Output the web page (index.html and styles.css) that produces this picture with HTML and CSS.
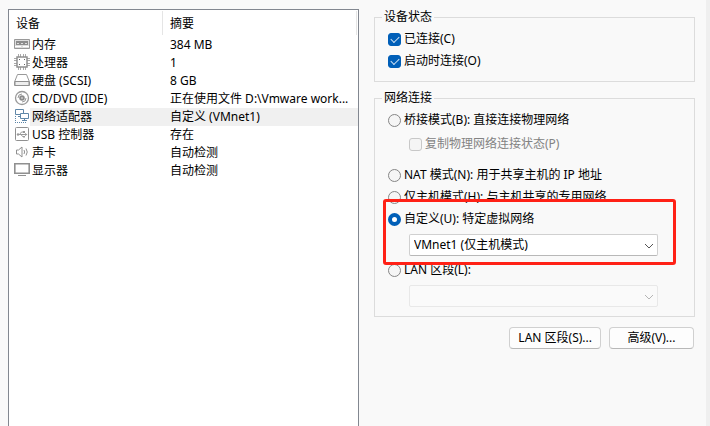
FILE: index.html
```html
<!DOCTYPE html>
<html lang="zh-CN">
<head>
    <meta charset="UTF-8">
    <meta name="viewport" content="width=device-width, initial-scale=1.0">
    <title>虚拟机设置</title>
    <link rel="stylesheet" href="styles.css">
</head>
<body>

<div class="device-panel">
    <table class="device-table">
        <thead>
            <tr><th class="col-name">设备</th><th class="col-summary">摘要</th></tr>
        </thead>
        <tbody>
            <tr>
                <td><div class="device"><svg class="icon" viewBox="0 0 16 16"><path d="M.5 3.500h15v9H.5z" fill="#ddd" stroke="#999"/><path d="M2 5h12v4H2z" fill="#8c8c8c"/><path d="M3 7.500h2M7 7.500h2M11 7.500h2" stroke="#ddd"/><path d="M1 10.500h6M9 10.500h6" stroke="#fff"/></svg><span class="name">内存</span></div></td>
                <td>384 MB</td>
            </tr>
            <tr>
                <td><div class="device"><svg class="icon" viewBox="0 0 16 16"><path d="M4.500 0v3M6.500 0v3M9.500 0v3M11.500 0v3M4.500 13v3M6.500 13v3M9.500 13v3M11.500 13v3M13 4.500h3M13 6.500h3M13 9.500h3M13 11.500h3M0 4.500h3M0 6.500h3M0 9.500h3M0 11.500h3" stroke="#aaa"/><path d="M3 3h10v10H3z" fill="#fff" stroke="#909090" stroke-width="1.500"/><path d="M5 5h1v1H5zM10 5h1v1h-1zM5 10h1v1H5zM10 10h1v1h-1z" fill="#666"/></svg><span class="name">处理器</span></div></td>
                <td>1</td>
            </tr>
            <tr>
                <td><div class="device"><svg class="icon" viewBox="0 0 16 16"><path d="M3.500 2.500h9l3 7.500v3.500H.5V10z" fill="#fff" stroke="#999"/><path d="M1 9.500h14v4H1z" fill="#eee" stroke="#909090"/></svg><span class="name">硬盘 (SCSI)</span></div></td>
                <td>8 GB</td>
            </tr>
            <tr>
                <td><div class="device"><svg class="icon" viewBox="0 0 16 16"><g fill="none" stroke="#999"><circle cx="8" cy="8" r="6.500" fill="#fff" stroke-width="1.300"/><circle cx="8" cy="8" r="1.800" stroke="#8c8c8c" stroke-width="2"/><path d="M4 8a4 4 0 0 1 4-4M12 8a4 4 0 0 1-4 4"/></g></svg><span class="name">CD/DVD (IDE)</span></div></td>
                <td>正在使用文件 D:\Vmware work...</td>
            </tr>
            <tr class="selected">
                <td><div class="device"><svg class="icon" viewBox="0 0 16 16"><g fill="#fff" stroke="#5f87a8"><path d="M1.500 1.500h8v5h-8zM4 8.500h3"/><path d="M6.500 5.500h8v5h-8zM8 12.500h5M10.500 10.500v2"/></g><path d="M1.500 8v7M1 14.500h12" fill="none" stroke="#5f87a8" stroke-dasharray="1 1"/></svg><span class="name">网络适配器</span></div></td>
                <td>自定义 (VMnet1)</td>
            </tr>
            <tr>
                <td><div class="device"><svg class="icon" viewBox="0 0 16 16"><rect x="1.500" y="1.500" width="13" height="13" rx="1" fill="#fff" stroke="#909090"/><path d="M4 8.500h8M5.500 8.500l2-2.500H9M7 8.500l1.500 2H10" fill="none" stroke="#999"/><path d="M11 7l2.500 1.500L11 10zM9 5h2v2H9zM9 10h2v1.500H9z" fill="#999"/><circle cx="4" cy="8.500" r="1.200" fill="#999"/></svg><span class="name">USB 控制器</span></div></td>
                <td>存在</td>
            </tr>
            <tr>
                <td><div class="device"><svg class="icon" viewBox="0 0 16 16"><g fill="none" stroke="#909090"><path d="M2.500 6v4h2l3.500 3V3L4.500 6z" fill="#fff"/><path d="M10 6q1.200 2 0 4M12 4.500q2.500 3.500 0 7"/></g></svg><span class="name">声卡</span></div></td>
                <td>自动检测</td>
            </tr>
            <tr>
                <td><div class="device"><svg class="icon" viewBox="0 0 16 16"><path d="M.8 1.800h14.400v9.400H.8z" fill="#fff" stroke="#909090" stroke-width="1.600"/><path d="M4 13.500h8" stroke="#909090"/></svg><span class="name">显示器</span></div></td>
                <td>自动检测</td>
            </tr>
        </tbody>
    </table>
</div>

<form class="settings">
    <fieldset>
        <legend>设备状态</legend>
        <label class="option"><input type="checkbox" checked>已连接(C)</label>
        <label class="option"><input type="checkbox" checked>启动时连接(O)</label>
    </fieldset>

    <fieldset>
        <legend>网络连接</legend>
        <label class="option"><input type="radio" name="net">桥接模式(B): 直接连接物理网络</label>
        <label class="option sub disabled"><input type="checkbox" disabled>复制物理网络连接状态(P)</label>
        <label class="option"><input type="radio" name="net">NAT 模式(N): 用于共享主机的 IP 地址</label>
        <label class="option"><input type="radio" name="net">仅主机模式(H): 与主机共享的专用网络</label>
        <div class="custom">
            <label class="option"><input type="radio" name="net" checked>自定义(U): 特定虚拟网络</label>
            <div class="combo">
                <select aria-label="特定虚拟网络"><option>VMnet1 (仅主机模式)</option></select>
                <svg class="arrow" viewBox="0 0 10 6"><path d="M1 1l4 4 4-4"/></svg>
            </div>
            <div class="highlight"></div>
        </div>
        <label class="option"><input type="radio" name="net">LAN 区段(L):</label>
        <div class="combo">
            <select aria-label="LAN 区段" disabled><option></option></select>
            <svg class="arrow" viewBox="0 0 10 6"><path d="M1 1l4 4 4-4"/></svg>
        </div>
    </fieldset>

    <div class="buttons">
        <button type="button">LAN 区段(S)...</button>
        <button type="button">高级(V)...</button>
    </div>
</form>

</body>
</html>
```

FILE: styles.css
```css
* {
    box-sizing: border-box;
}
html {
    background-color: #f9f9f9;
}
body {
    margin: 0;
    padding: 9px 11px 0 8px;
    min-height: 100vh;
    display: grid;
    grid-template-columns: minmax(0, 1fr) 321px;
    gap: 15px;
    border-right: 4px solid #efefef;
    color: #000;
    font-family: "Noto Sans", "Noto Sans CJK SC", sans-serif;
    font-size: 12px;
    line-height: 18px;
}
input, select, button {
    margin: 0;
    font: inherit;
    color: inherit;
}

/* 设备列表 */
.device-panel {
    background-color: #fff;
    border: 1px solid #828790;
    border-bottom: none;
}
.device-table {
    width: 100%;
    table-layout: fixed;
    border-collapse: collapse;
}
.device-table th {
    height: 26px;
    padding: 2px 7px 0;
    font-weight: normal;
    text-align: left;
    background: linear-gradient(#e5e5e5, #e5e5e5) right 1px top 1px / 1px 24px no-repeat;
}
.device-table .col-name {
    width: 155px;
}
.device-table .col-summary {
    padding-left: 6px;
}
.device-table td {
    height: 18px;
    padding: 0 6px;
    white-space: nowrap;
    overflow: hidden;
    text-overflow: ellipsis;
}
.device-table td:first-child {
    padding: 0 0 0 5px;
}
.device {
    display: flex;
}
.icon {
    width: 16px;
    height: 16px;
    flex: none;
}
.name {
    flex: 1;
    padding-left: 2px;
}
.selected .name,
.selected td:last-child {
    background-color: #f0f0f0;
}

/* 右侧设置 */
fieldset {
    margin: 0 0 8px;
    padding: 3px 13px 9px;
    border: 1px solid #dcdcdc;
    min-width: 0;
}
legend {
    margin-left: -6px;
    padding: 0 2px;
    line-height: 16px;
}
.option {
    display: flex;
    align-items: center;
    gap: 3px;
    height: 22px;
}
.option input {
    appearance: none;
    width: 13px;
    height: 13px;
    border: 1px solid #868686;
    border-radius: 3px;
    background-color: #f5f5f5;
}
.option input[type="radio"] {
    border-radius: 50%;
}
.option input[type="radio"]:checked {
    border: 4px solid #005fb8;
    background-color: #fff;
}
.option input[type="checkbox"]:checked {
    border-color: #005fb8;
    background-color: #005fb8;
    display: grid;
    place-items: center;
}
.option input[type="checkbox"]:checked::before {
    content: "";
    width: 7px;
    height: 4px;
    margin-bottom: 2px;
    border-left: 1px solid #cfe2f4;
    border-bottom: 1px solid #cfe2f4;
    transform: rotate(-45deg);
}
.sub {
    margin: 2px 0 9px 21px;
}
.disabled {
    color: #838383;
}
.option input:disabled {
    border-color: #c8c8c8;
}
.combo {
    position: relative;
    margin: 4px 23px 3px 21px;
}
.combo select {
    display: block;
    appearance: none;
    width: 100%;
    height: 22px;
    padding: 0 20px 0 4px;
    border: 1px solid #d0d0d0;
    border-bottom-color: #b8b8b8;
    border-radius: 2px;
    background-color: #fff;
}
.combo select:disabled {
    border-color: #e8e8e8;
    background-color: #fafafa;
    opacity: 1;
}
.arrow {
    position: absolute;
    right: 4px;
    top: 9px;
    width: 10px;
    height: 6px;
    fill: none;
    stroke: #555;
    pointer-events: none;
}
select:disabled + .arrow {
    stroke: #b5b5b5;
}
.combo:last-child {
    margin-bottom: 0;
}
.custom {
    position: relative;
}
/* 红色标注框 */
.highlight {
    position: absolute;
    inset: -9px 5px -9px -5px;
    border: 3px solid #ff2116;
    border-radius: 3px;
    pointer-events: none;
}
.buttons {
    display: flex;
    justify-content: flex-end;
    gap: 8px;
    padding: 2px 1px 0 0;
}
.buttons button {
    height: 22px;
    min-width: 85px;
    padding: 0 8px;
    border: 1px solid #d0d0d0;
    border-bottom-color: #b8b8b8;
    border-radius: 4px;
    background-color: #fdfdfd;
    white-space: nowrap;
}
```
